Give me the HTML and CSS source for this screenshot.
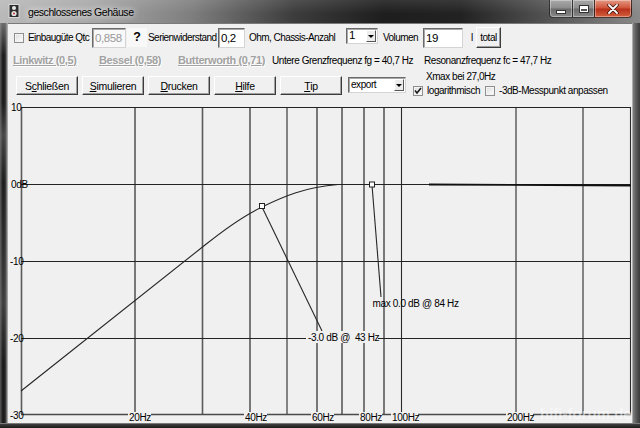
FILE: index.html
```html
<!DOCTYPE html>
<html lang="de">
<head>
<meta charset="utf-8">
<title>geschlossenes Gehäuse</title>
<link rel="stylesheet" href="styles.css">
</head>
<body>
<div class="window">
  <div class="titlebar">
    <svg class="appicon" width="14" height="14" viewBox="0 0 14 14">
      <rect x="2" y="0.5" width="10" height="13" fill="#2e2e2e" stroke="#d8d8d8" stroke-width="1"/>
      <circle cx="7" cy="4" r="2" fill="#e8e8e8"/>
      <circle cx="7" cy="9.5" r="2.6" fill="#e8e8e8"/>
      <circle cx="7" cy="9.5" r="1" fill="#b33"/>
    </svg>
    <span class="title">geschlossenes Gehäuse</span>
    <div class="caption">
      <div class="cbtn cmin"><span class="gmin"></span></div>
      <div class="cbtn cmax"><span class="gmax"></span></div>
      <div class="cbtn cclose">
        <svg width="12" height="10" viewBox="0 0 12 10"><path d="M2 1 L10 9 M10 1 L2 9" stroke="#3a1008" stroke-width="3.4" stroke-linecap="round"/><path d="M2 1 L10 9 M10 1 L2 9" stroke="#fff" stroke-width="1.8" stroke-linecap="round"/></svg>
      </div>
    </div>
  </div>
  <div class="main">
    <div class="lframe"></div>
    <div class="client">
      <div class="row1">
        <span class="cbwrap"><span class="cb"></span></span>
        <span class="lbl w-qtc">Einbaugüte Qtc</span>
        <span class="field dis w-qf">0,858</span>
        <span class="qmark">?</span>
        <span class="lbl w-ser">Serienwiderstand</span>
        <span class="field w-sf">0,2</span>
        <span class="lbl w-ohm">Ohm, Chassis-Anzahl</span>
        <span class="combo w-cnt"><span class="ctext">1</span><span class="carrow"></span></span>
        <span class="lbl w-vol">Volumen</span>
        <span class="field w-vf">19</span>
        <span class="lbl w-l">l</span>
        <span class="btn w-total">total</span>
      </div>
      <div class="row2">
        <span class="link w-lw">Linkwitz (0,5)</span>
        <span class="link w-bs">Bessel (0,58)</span>
        <span class="link w-bw">Butterworth (0,71)</span>
        <span class="info w-fg">Untere Grenzfrequenz fg = 40,7 Hz</span>
        <span class="info">Resonanzfrequenz fc = 47,7 Hz</span>
      </div>
      <div class="row3">
        <div class="btns">
          <span class="btn big">S<u>c</u>hließen</span>
          <span class="btn big"><u>S</u>imulieren</span>
          <span class="btn big"><u>D</u>rucken</span>
          <span class="btn big"><u>H</u>ilfe</span>
          <span class="btn big"><u>T</u>ip</span>
        </div>
        <span class="combo w-exp"><span class="ctext">export</span><span class="carrow"></span></span>
        <div class="opts">
          <div class="xmax">Xmax bei 27,0Hz</div>
          <div class="checks">
            <span class="cb checked"><svg width="8" height="8" viewBox="0 0 8 8"><path d="M1 3.6 L3 6 L7 1" fill="none" stroke="#1a1a1a" stroke-width="1.6"/></svg></span>
            <span class="lbl w-log">logarithmisch</span>
            <span class="cb"></span>
            <span class="lbl w-3db">-3dB-Messpunkt anpassen</span>
          </div>
        </div>
      </div>
      <svg class="plot" width="624" height="323" viewBox="8 100 624 323">
        <g class="vgrid">
          <line x1="21.5" y1="107" x2="21.5" y2="414"/>
          <line x1="135" y1="107" x2="135" y2="414"/>
          <line x1="202.5" y1="107" x2="202.5" y2="414"/>
          <line x1="250" y1="107" x2="250" y2="414"/>
          <line class="thin" x1="287" y1="107" x2="287" y2="414"/>
          <line x1="317" y1="107" x2="317" y2="414"/>
          <line x1="342" y1="107" x2="342" y2="414"/>
          <line x1="364" y1="107" x2="364" y2="414"/>
          <line x1="384" y1="107" x2="384" y2="414"/>
          <line class="thin" x1="401.5" y1="107" x2="401.5" y2="414"/>
          <line class="thin" x1="516" y1="107" x2="516" y2="414"/>
          <line class="thin" x1="583" y1="107" x2="583" y2="414"/>
          <line class="thin" x1="630.5" y1="107" x2="630.5" y2="414"/>
        </g>
        <g class="hgrid">
          <line x1="21" y1="107.5" x2="631" y2="107.5"/>
          <line x1="21" y1="184.5" x2="631" y2="184.5"/>
          <line x1="21" y1="261.5" x2="631" y2="261.5"/>
          <line x1="21" y1="338.5" x2="631" y2="338.5"/>
          <line class="bottom" x1="21" y1="414.5" x2="631" y2="414.5"/>
        </g>
        <path class="curve" d="M21,391 L205,245 C225,229 243,216 262,207 C282,197 305,187 338,184.5"/>
        <path class="curve flat" d="M429,184.5 L631,185.5"/>
        <line class="lead" x1="262" y1="207" x2="322" y2="331"/>
        <line class="lead" x1="372" y1="185" x2="381" y2="297"/>
        <rect class="mark" x="259.5" y="203.5" width="5" height="5"/>
        <rect class="mark" x="369.5" y="182" width="5" height="5"/>
        <g class="ylab">
          <text x="11" y="111">10</text>
          <text x="11" y="188">0dB</text>
          <text x="10" y="265">-10</text>
          <text x="10" y="342">-20</text>
          <text x="10" y="419">-30</text>
        </g>
        <g class="xlab">
          <rect x="128" y="412" width="23" height="11"/><text x="129" y="421">20Hz</text>
          <rect x="244" y="412" width="23" height="11"/><text x="245" y="421">40Hz</text>
          <rect x="311" y="412" width="23" height="11"/><text x="312" y="421">60Hz</text>
          <rect x="359" y="412" width="23" height="11"/><text x="360" y="421">80Hz</text>
          <rect x="391" y="412" width="27" height="11"/><text x="392" y="421">100Hz</text>
          <rect x="506" y="412" width="27" height="11"/><text x="507" y="421">200Hz</text>
        </g>
        <rect class="tagbg" x="306" y="331" width="72" height="12"/>
        <text class="tag" x="308" y="341">-3.0 dB @&#160; 43 Hz</text>
        <text class="tag" x="372.5" y="307">max 0.0 dB @ 84 Hz</text>
        <text class="wm" x="540" y="419">hifi-forum.de</text>
      </svg>
    </div>
    <div class="rframe"></div>
  </div>
  <div class="bframe"></div>
</div>
</body>
</html>
```
FILE: styles.css
```css
* { box-sizing: border-box; }
html, body { margin: 0; padding: 0; background: #000; }

.window {
  width: 640px;
  height: 428px;
  overflow: hidden;
  font-family: "Liberation Sans", Arial, sans-serif;
  font-size: 10px;
  letter-spacing: -0.45px;
  color: #000;
  background: #2e2e2e;
}

/* ---------- title bar ---------- */
.titlebar {
  height: 23px;
  display: flex;
  align-items: flex-start;
  background:
    linear-gradient(180deg, rgba(255,255,255,0.10), rgba(255,255,255,0) 60%),
    linear-gradient(90deg, #b9b9b9 0%, #a8a8a8 14%, #7e7e7e 30%, #3c3c3c 46%, #1e1e1e 60%, #222 72%, #555 86%, #8a8a8a 100%);
}
.appicon { margin: 4px 0 0 7px; flex: none; }
.title {
  margin-left: 7px;
  line-height: 24px;
  font-size: 10.5px;
  letter-spacing: -0.45px;
  color: #000;
  text-shadow: 0 0 6px rgba(255,255,255,0.9), 0 0 10px rgba(255,255,255,0.6);
}
.caption {
  margin-left: auto;
  margin-right: 8px;
  display: flex;
  height: 18px;
}
.cbtn {
  height: 18px;
  border: 1px solid rgba(20,20,20,0.75);
  border-top: none;
  display: flex;
  align-items: center;
  justify-content: center;
  box-shadow: inset 0 0 0 1px rgba(255,255,255,0.35);
}
.cmin {
  width: 23px;
  border-bottom-left-radius: 4px;
  border-right: none;
  background: linear-gradient(180deg, #a9a9a9 0%, #8c8c8c 48%, #6a6a6a 52%, #8a8a8a 100%);
}
.cmax {
  width: 22px;
  border-right: none;
  background: linear-gradient(180deg, #a9a9a9 0%, #8c8c8c 48%, #6a6a6a 52%, #8a8a8a 100%);
}
.cclose {
  width: 38px;
  border-bottom-right-radius: 4px;
  background: linear-gradient(180deg, #e49a86 0%, #d0543a 46%, #b8301a 54%, #d4603e 100%);
}
.gmin {
  width: 10px;
  height: 4px;
  margin-top: 6px;
  background: #fff;
  border: 1px solid #333;
}
.gmax {
  width: 10px;
  height: 8px;
  border: 1px solid #333;
  box-shadow: inset 0 0 0 1px #fff, inset 0 2px 0 1px #fff;
  background: #555;
}

/* ---------- frames ---------- */
.main { display: flex; height: 400px; }
.lframe {
  width: 8px;
  flex: none;
  background:
    linear-gradient(180deg, rgba(170,170,170,0.55) 0%, rgba(0,0,0,0) 8%, rgba(0,0,0,0) 20%, rgba(150,150,150,0.35) 28%, rgba(0,0,0,0) 40%, rgba(140,140,140,0.3) 70%, rgba(0,0,0,0) 85%),
    linear-gradient(90deg, #5c5c5c 0%, #1a1a1a 35%, #262626 65%, #8a8a8a 88%, #c8c8c8 100%);
}
.rframe {
  width: 8px;
  flex: none;
  background: linear-gradient(90deg, #d0d0d0 0%, #7c7c7c 15%, #545454 60%, #3a3a3a 100%);
}
.bframe {
  height: 5px;
  background: linear-gradient(180deg, #9a9a9a 0%, #3a3a3a 30%, #1c1c1c 100%);
}

/* ---------- client ---------- */
.client {
  width: 624px;
  flex: none;
  background: #f0f0f0;
  display: flex;
  flex-direction: column;
  box-shadow: inset 0 1px 0 #7a7a7a;
}

.row1 {
  margin-top: 4px;
  height: 21px;
  display: flex;
  align-items: center;
  padding-left: 6px;
}
.row2 {
  margin-top: 5px;
  height: 14px;
  display: flex;
  align-items: center;
  padding-left: 5px;
}
.row3 {
  margin-top: 3px;
  height: 28px;
  display: flex;
  align-items: flex-start;
  padding-left: 5px;
}
.plot { margin-top: 2px; display: block; }

.lbl { white-space: nowrap; flex: none; }
.row1 .lbl { letter-spacing: -0.55px; }
.cbwrap { width: 14px; flex: none; display: flex; }
.cb {
  display: inline-flex;
  align-items: center;
  justify-content: center;
  width: 10px;
  height: 10px;
  flex: none;
  background: linear-gradient(135deg, #dcdcdc, #fff);
  border: 1px solid #8e8f8f;
  box-shadow: inset 0 0 0 1px #f4f4f4;
}
.w-qtc { width: 64px; }
.w-ser { width: 72px; padding-left: 2px; }
.w-ohm { width: 101px; padding-left: 4px; }
.w-vol { width: 45px; padding-left: 5px; }
.w-l { width: 13px; padding-left: 8px; }

.field {
  flex: none;
  height: 20px;
  background: #fff;
  border: 1px solid;
  border-color: #6a6a6a #d4d4d4 #d4d4d4 #6a6a6a;
  box-shadow: inset 1px 1px 0 #a8a8a8;
  font-size: 11.5px;
  letter-spacing: -0.4px;
  line-height: 18px;
  padding-left: 2px;
}
.field.dis { color: #999; background: #f9f9f9; }
.w-qf { width: 34px; }
.w-sf { width: 27px; }
.w-vf { width: 40px; }

.qmark {
  width: 20px;
  height: 19px;
  flex: none;
  text-align: center;
  font-weight: bold;
  font-size: 12.5px;
  letter-spacing: 0;
  line-height: 19px;
  background: #f8f8f8;
  margin-left: 1px;
  margin-right: -1px;
}

.combo {
  flex: none;
  display: flex;
  background: #fff;
  border: 1px solid;
  border-color: #6a6a6a #d4d4d4 #d4d4d4 #6a6a6a;
  box-shadow: inset 1px 1px 0 #a8a8a8;
}
.ctext { flex: 1; padding-left: 2px; }
.carrow {
  width: 10px;
  flex: none;
  margin: 1px 1px 1px 0;
  background: #ececec;
  border: 1px solid;
  border-color: #fff #555 #555 #fff;
  position: relative;
}
.carrow::after {
  content: "";
  position: absolute;
  left: 1px;
  top: 50%;
  margin-top: -1px;
  border-left: 3px solid transparent;
  border-right: 3px solid transparent;
  border-top: 3px solid #000;
}
.w-cnt { width: 32px; height: 16px; margin-top: -4px; font-size: 11.5px; line-height: 13px; }
.w-exp { width: 58px; height: 16px; margin-left: 6px; margin-top: 7px; line-height: 13px; }

.btn {
  flex: none;
  display: flex;
  align-items: center;
  justify-content: center;
  background: #f0f0f0;
  border: 1px solid;
  border-color: #fff #3c3c3c #3c3c3c #fff;
  box-shadow: inset -1px -1px 0 #a0a0a0;
  white-space: nowrap;
}
.w-total { width: 25px; height: 21px; }
.btns { display: flex; gap: 4px; margin-top: 6px; padding-left: 3px; }
.btn.big { width: 62px; height: 19px; font-size: 10.5px; letter-spacing: -0.3px; }
.btn u { text-decoration-thickness: 1px; text-underline-offset: 1px; }

.link {
  flex: none;
  white-space: nowrap;
  color: #a2a2a2;
  font-weight: bold;
  font-size: 11px;
  letter-spacing: -0.4px;
  text-decoration: underline;
  text-shadow: 1px 1px 0 #fff;
}
.w-lw { width: 86px; }
.w-bs { width: 79px; }
.w-bw { width: 94px; }
.info { flex: none; white-space: nowrap; }
.w-fg { width: 152px; }

.opts { margin-left: 7px; display: flex; flex-direction: column; }
.xmax { padding-left: 13px; height: 12px; line-height: 12px; margin-top: 1px; }
.checks { display: flex; align-items: center; margin-top: 1px; height: 13px; }
.w-log { width: 62px; padding-left: 4px; }
.w-3db { padding-left: 4px; }

/* ---------- plot ---------- */
.vgrid line { stroke: #5a5a5a; stroke-width: 1.6; }
.vgrid line.thin { stroke: #2a2a2a; stroke-width: 1.1; }
.hgrid line { stroke: #222; stroke-width: 1.1; }
.hgrid line.bottom { stroke: #4a4a4a; stroke-width: 1.6; }
.curve { fill: none; stroke: #262626; stroke-width: 1.1; }
.curve.flat { stroke: #111; stroke-width: 1.8; }
.lead { stroke: #262626; stroke-width: 1.1; }
.mark { fill: #fff; stroke: #222; stroke-width: 1; }
.plot text { font-family: "Liberation Sans", Arial, sans-serif; font-size: 10px; letter-spacing: -0.35px; fill: #000; }
.xlab rect, .tagbg { fill: #f0f0f0; }
.plot text.wm { font-size: 15px; font-weight: bold; letter-spacing: 0; fill: #fff; fill-opacity: 0.5; }
```
